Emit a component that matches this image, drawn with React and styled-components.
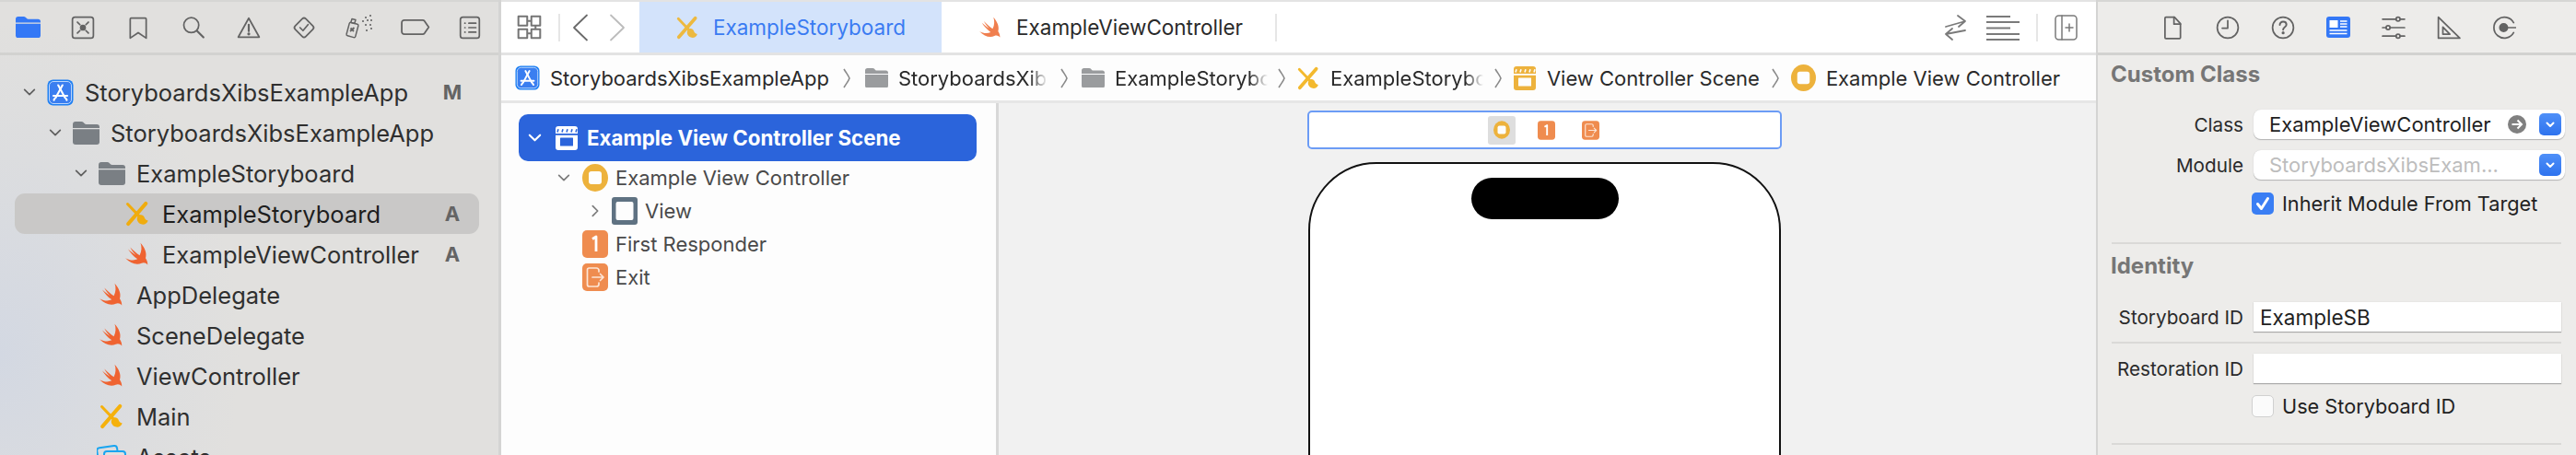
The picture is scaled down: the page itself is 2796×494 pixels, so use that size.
import React from "react";
import styled, { createGlobalStyle } from "styled-components";

const GlobalStyle = createGlobalStyle`
  html, body {
    margin: 0;
    padding: 0;
    background: #fff;
    font-family: Inter, "Noto Sans", "Liberation Sans", sans-serif;
  }
`;

const Window = styled.div`
  width: 2796px;
  height: 494px;
  overflow: hidden;
  display: flex;
  color: #2c2c2c;
`;

/* ---------- left navigator ---------- */
const Sidebar = styled.div`
  width: 541px;
  flex: none;
  height: 100%;
  border-right: 3px solid #d4d4d3;
  background: radial-gradient(ellipse 260px 360px at 0% 78%, #d3d8e2 0%, #dcdddf 60%, #e1e0de 100%);
  background-color: #e1e0de;
`;

const IconBar = styled.div`
  height: 55px;
  border-top: 2px solid #d6d6d4;
  border-bottom: 3px solid #d2d2d0;
  display: flex;
  align-items: center;
  padding-left: ${(p) => p.$left || 0}px;
`;

const BarSlot = styled.div`
  width: 60px;
  height: 40px;
  flex: none;
  display: flex;
  align-items: center;
  justify-content: center;
`;

const Tree = styled.div`
  padding-top: 18px;
`;

const TreeRow = styled.div`
  height: 44px;
  margin: 0 21px 0 16px;
  padding-left: ${(p) => 2 + p.$level * 28}px;
  display: flex;
  align-items: center;
  border-radius: 11px;
  background: ${(p) => (p.$selected ? "#c9c8c7" : "transparent")};
  color: ${(p) => (p.$selected ? "#1e1e1e" : "#2f2f2f")};
  font-size: 25.5px;
  white-space: nowrap;
`;

const ChevronSlot = styled.div`
  width: 28px;
  flex: none;
  display: flex;
  align-items: center;
  justify-content: center;
`;

const TreeIcon = styled.div`
  width: 38px;
  margin-right: 8px;
  flex: none;
  display: flex;
  align-items: center;
  justify-content: center;
`;

const Badge = styled.div`
  margin-left: auto;
  width: 40px;
  margin-right: 9px;
  text-align: center;
  font-weight: 700;
  font-size: 22px;
  color: #646464;
`;

/* ---------- editor ---------- */
const Editor = styled.div`
  flex: 1;
  min-width: 0;
  height: 100%;
  display: flex;
  flex-direction: column;
  background: #fff;
`;

const TabBar = styled.div`
  height: 55px;
  flex: none;
  border-top: 2px solid #e3e3e3;
  border-bottom: 3px solid #e3e3e3;
  display: flex;
  align-items: stretch;
  background: #fff;
`;

const TabTools = styled.div`
  width: 150px;
  flex: none;
  display: flex;
  align-items: center;
  padding-left: 17px;
  box-sizing: border-box;
  gap: 18px;
`;

const ToolRule = styled.div`
  width: 2px;
  height: 30px;
  flex: none;
  background: #e6e6e6;
`;

const NavArrow = styled.div`
  flex: none;
  display: flex;
  margin: ${(p) => p.$margin};
`;

const Tab = styled.div`
  width: ${(p) => p.$w}px;
  flex: none;
  box-sizing: border-box;
  padding-left: ${(p) => p.$pad || 0}px;
  display: flex;
  align-items: center;
  justify-content: center;
  gap: 15px;
  font-size: 22.5px;
  background: ${(p) => (p.$active ? "#d3e3fb" : "#fff")};
  color: ${(p) => (p.$active ? "#3a7bf2" : "#2a2a2a")};
`;

const TabRule = styled(ToolRule)`
  align-self: center;
`;

const TabActions = styled.div`
  margin-left: auto;
  display: flex;
  align-items: center;
  gap: 18px;
  padding-right: 20px;
`;

const Breadcrumbs = styled.div`
  height: 49px;
  flex: none;
  border-bottom: 3px solid #e6e6e6;
  background: #fdfdfd;
  display: flex;
  align-items: center;
  padding-left: 15px;
  font-size: 22px;
  color: #2a2a2a;
  white-space: nowrap;
`;

const Crumb = styled.div`
  display: flex;
  align-items: center;
  gap: 11px;
  flex: none;
`;

const CrumbText = styled.span`
  display: block;
  overflow: hidden;
  width: ${(p) => (p.$w ? `${p.$w}px` : "auto")};
  ${(p) =>
    p.$w
      ? "mask-image: linear-gradient(to right, #000 88%, transparent 100%);"
      : ""}
`;

const CrumbSep = styled.div`
  width: ${(p) => p.$w}px;
  flex: none;
  display: flex;
  justify-content: center;
`;

const EditorBody = styled.div`
  flex: 1;
  min-height: 0;
  display: flex;
`;

const Outline = styled.div`
  width: 540px;
  flex: none;
  box-sizing: border-box;
  background: #fdfdfd;
  border-right: 3px solid #d8d8d8;
  padding: 12px 0 0 19px;
`;

const SceneRow = styled.div`
  width: 497px;
  height: 51px;
  border-radius: 10px;
  background: #2b64db;
  color: #fff;
  font-weight: 700;
  font-size: 22.3px;
  display: flex;
  align-items: center;
  white-space: nowrap;
`;

const SceneChevron = styled.div`
  width: 32px;
  margin-left: 1px;
  flex: none;
  display: flex;
  justify-content: center;
`;

const SceneIcon = styled.div`
  width: 32px;
  margin: 0 6px 0 3px;
  flex: none;
  display: flex;
  justify-content: center;
`;

const OutlineRow = styled.div`
  height: 36px;
  display: flex;
  align-items: center;
  padding-left: ${(p) => p.$left}px;
  color: #4a4a4a;
  font-size: 22px;
  white-space: nowrap;
`;

const OutlineGlyph = styled.div`
  width: 28px;
  flex: none;
  margin-right: 8px;
  display: flex;
  justify-content: center;
`;

const OutlineChevron = styled.div`
  width: 24px;
  flex: none;
  margin-right: ${(p) => p.$gap}px;
  display: flex;
  justify-content: center;
`;

const Canvas = styled.div`
  flex: 1;
  background: #f1f1f1;
  padding: 8px 0 0 335px;
  overflow: hidden;
`;

const SceneDock = styled.div`
  width: 515px;
  height: 42px;
  box-sizing: border-box;
  border: 2px solid #6c9cf5;
  border-radius: 5px;
  background: #fff;
  display: flex;
  align-items: center;
  padding-left: 194px;
`;

const DockSlot = styled.div`
  width: 30px;
  height: 31px;
  flex: none;
  border-radius: 3px;
  margin-right: 18px;
  background: ${(p) => (p.$active ? "#dedede" : "transparent")};
  display: flex;
  align-items: center;
  justify-content: center;
`;

const Phone = styled.div`
  width: 513px;
  height: 600px;
  margin: 14px 0 0 1px;
  box-sizing: border-box;
  border: 2px solid #111;
  border-radius: 74px;
  background: #fff;
  padding: 15px 0 0 175px;
`;

const Island = styled.div`
  width: 160px;
  height: 45px;
  border-radius: 23px;
  background: #000;
`;

/* ---------- right inspector ---------- */
const Inspector = styled.div`
  width: 521px;
  flex: none;
  height: 100%;
  box-sizing: border-box;
  background: #edecea;
  border-left: 2px solid #d4d4d3;
`;

const Section = styled.div`
  padding: ${(p) => p.$top}px 16px 0 14px;
`;

const SectionTitle = styled.div`
  height: 30px;
  line-height: 30px;
  font-weight: 700;
  font-size: 24px;
  color: #767676;
`;

const FormRow = styled.div`
  display: flex;
  align-items: center;
  gap: 11px;
  margin-top: ${(p) => p.$gap || 0}px;
`;

const FieldLabel = styled.div`
  width: 144px;
  flex: none;
  text-align: right;
  font-size: 20.7px;
  color: #2a2a2a;
  white-space: nowrap;
`;

const PopupField = styled.div`
  width: 338px;
  height: 32px;
  margin-right: -4px;
  flex: none;
  box-sizing: border-box;
  border-radius: 8px;
  background: #fff;
  box-shadow: 0 1px 1px #b3b3b3, 0 0 1px #c8c8c8;
  display: flex;
  align-items: center;
  padding: 0 4px 0 17px;
  font-size: 22px;
  color: ${(p) => (p.$muted ? "#bdbdbd" : "#1f1f1f")};
  white-space: nowrap;
`;

const FieldEnd = styled.div`
  margin-left: auto;
  display: flex;
  align-items: center;
  gap: 14px;
`;

const Stepper = styled.div`
  width: 24px;
  height: 24px;
  border-radius: 5px;
  background: linear-gradient(#4e8ff8, #2f73ee);
  display: flex;
  align-items: center;
  justify-content: center;
`;

const CheckRow = styled.div`
  display: flex;
  align-items: center;
  gap: 9px;
  margin: ${(p) => p.$gap}px 0 0 153px;
  font-size: 21.7px;
  color: #222;
  white-space: nowrap;
`;

const CheckBox = styled.div`
  width: 24px;
  height: 24px;
  flex: none;
  box-sizing: border-box;
  border-radius: 5px;
  background: ${(p) => (p.$checked ? "#3a7ef4" : "#fbfbfb")};
  border: ${(p) => (p.$checked ? "none" : "1px solid #d0d0d0")};
  display: flex;
  align-items: center;
  justify-content: center;
`;

const TextField = styled.div`
  width: 334px;
  height: 32px;
  flex: none;
  box-sizing: border-box;
  background: #fff;
  box-shadow: 0 1px 1px #a9a9a9, 0 0 1px #cfcfcf;
  padding-left: 7px;
  display: flex;
  align-items: center;
  font-size: 22.5px;
  color: #222;
`;

const Rule = styled.div`
  height: 2px;
  margin: ${(p) => p.$top}px 0 0 1px;
  background: #dad9d7;
`;

/* ---------- drawings ---------- */
const Svg = ({ s = 26, h, vb = "0 0 24 24", children, stroke = "#636363", sw = 1.6 }) => (
  <svg
    width={s}
    height={h || s}
    viewBox={vb}
    fill="none"
    stroke={stroke}
    strokeWidth={sw}
    strokeLinecap="round"
    strokeLinejoin="round"
  >
    {children}
  </svg>
);

const Chevron = ({ dir = "down", color = "#5f5f5f", s = 16, sw = 2.6 }) => (
  <Svg s={s} stroke={color} sw={sw}>
    {dir === "down" ? <path d="M4 8l8 8 8-8" /> : <path d="M8 4l8 8-8 8" />}
  </Svg>
);

const Swift = ({ s = 28, color = "#ef6331" }) => (
  <svg width={s} height={s} viewBox="0 0 24 24">
    <path
      fill={color}
      d="M15 1.500C19 6 21.200 11 19.700 15.600 21 17.500 21.700 19.600 21.600 21.800 20.200 20 18 19.300 16 20.300 11.500 22.400 5.500 20.600 1 15.600 5 17.800 9 18.200 12.200 16.600 8.500 13.800 5.500 10.400 3.400 7.200 6 9.600 8.800 11.600 10.700 12.800 8.600 10.600 6.700 8 5.400 5.500 8.300 8.500 11.200 11 14.200 13.100 16.200 9.200 16.300 5.200 15 1.500Z"
    />
  </svg>
);

const StoryboardIcon = ({ s = 28, color = "#f0ac0e" }) => (
  <svg width={s} height={s} viewBox="0 0 24 24" fill="none" stroke={color} strokeLinecap="round">
    <path d="M20 2.500L3.500 21.500" strokeWidth="3.400" />
    <path d="M3 3L13.500 14" strokeWidth="2.600" />
    <path d="M12.500 14.500c1.800-2.400 5.200-1.800 6 .8.500 1.700 1.600 2.800 3.500 3.100-.8 2.900-3.800 4.400-6.500 3.300-3.100-1.200-4.800-4.800-3-7.200z" fill={color} stroke="none" />
  </svg>
);

const Folder = ({ w = 29, color = "#7a7f84" }) => (
  <svg width={w} height={(w * 25) / 29} viewBox="0 0 29 25">
    <path
      fill={color}
      d="M0 3a3 3 0 0 1 3-3h6.500c1.600 0 2.400 1.200 3.400 2.200.5.500 1 .8 1.800.8H26a3 3 0 0 1 3 3v1H0z"
    />
    <path fill={color} d="M0 8.200h29V22a3 3 0 0 1-3 3H3a3 3 0 0 1-3-3z" />
  </svg>
);

const AppIcon = ({ s = 29 }) => (
  <svg width={s} height={s} viewBox="0 0 29 29">
    <rect x="0.500" y="0.500" width="28" height="28" rx="6" fill="#1f80f3" />
    <rect x="2.500" y="2.500" width="24" height="24" rx="4.500" fill="#3a7ef0" stroke="#bcd6fb" strokeWidth="1" />
    <g stroke="#fff" strokeWidth="2.100" strokeLinecap="round" fill="none">
      <path d="M16.800 6.500L9.500 20" />
      <path d="M12.200 6.500L19.500 20" />
      <path d="M7 18h15" />
      <path d="M8.600 20.800L7.500 22.600" />
      <path d="M20.400 20.800L21.500 22.600" />
    </g>
  </svg>
);

const Assets = () => (
  <svg width="32" height="28" viewBox="0 0 32 28" fill="none" stroke="#19a5f0" strokeWidth="2">
    <rect x="1" y="3" width="22" height="17" rx="3" transform="rotate(-8 12 12)" />
    <rect x="8" y="8" width="23" height="18" rx="3" fill="#e1e0de" />
  </svg>
);

const SceneGlyph = ({ s = 26, color = "#fff", fillIn = "#2b64db" }) => (
  <svg width={s} height={s} viewBox="0 0 24 26">
    <rect x="0" y="0" width="24" height="26" rx="3" fill={color} />
    <path d="M3 3.200l-1 3.400M8 3.200l-1 3.400M13 3.200l-1 3.400M18 3.200l-1 3.400M23 3.200l-1 3.400" stroke={fillIn} strokeWidth="1.600" />
    <rect x="0" y="8" width="24" height="1.800" fill={fillIn} />
    <rect x="5" y="12.500" width="14" height="9" rx="0.500" fill={fillIn} />
  </svg>
);

const ControllerGlyph = ({ s = 28 }) => (
  <svg width={s} height={s + 2} viewBox="0 0 28 30">
    <ellipse cx="14" cy="15" rx="14" ry="15" fill="#edb23c" />
    <rect x="7" y="8" width="14" height="14" rx="3" fill="#fdfdfd" />
  </svg>
);

const ViewGlyph = () => (
  <svg width="28" height="30" viewBox="0 0 28 30">
    <rect x="0" y="0" width="28" height="30" rx="3" fill="#5f7282" />
    <rect x="4.500" y="5" width="19" height="20" rx="2" fill="#fdfdfd" />
  </svg>
);

const ResponderGlyph = ({ s = 28 }) => (
  <svg width={s} height={s + 2} viewBox="0 0 28 30">
    <rect width="28" height="30" rx="5" fill="#ef8c4f" />
    <path d="M11 9.500l4-2.500v16" fill="none" stroke="#fff" strokeWidth="2.800" strokeLinejoin="round" />
  </svg>
);

const ExitGlyph = ({ s = 28 }) => (
  <svg width={s} height={s + 2} viewBox="0 0 28 30">
    <rect width="28" height="30" rx="5" fill="#ef8c4f" />
    <g fill="none" stroke="#fde5d5" strokeWidth="1.700" strokeLinecap="round" strokeLinejoin="round">
      <path d="M18 9V7.500A2.500 2.500 0 0 0 15.500 5H7.500A2 2 0 0 0 5.500 7v16a2 2 0 0 0 2 2h8A2.500 2.500 0 0 0 18 22.500V21" />
      <path d="M11 15h12M19.500 11.500L23 15l-3.500 3.500" />
    </g>
  </svg>
);

const NavigatorIcons = () => (
  <>
    <BarSlot>
      <Folder w={27} color="#3478f6" />
    </BarSlot>
    <BarSlot>
      <Svg>
        <rect x="1.500" y="1.500" width="21" height="21" rx="2.500" />
        <circle cx="12" cy="12" r="2.300" fill="#636363" />
        <path d="M6.500 6.500l2.500 2.500M17.500 6.500L15 9M6.500 17.500L9 15M17.500 17.500L15 15" />
      </Svg>
    </BarSlot>
    <BarSlot>
      <Svg>
        <path d="M5 2.500h14a1 1 0 0 1 1 1v19l-8-5.500-8 5.500v-19a1 1 0 0 1 1-1z" />
      </Svg>
    </BarSlot>
    <BarSlot>
      <Svg>
        <circle cx="9.800" cy="9.500" r="7.500" />
        <path d="M15.500 15.200l6.500 6.500" strokeWidth="2" />
      </Svg>
    </BarSlot>
    <BarSlot>
      <Svg>
        <path d="M12 2.500L22.500 21.500h-21z" />
        <path d="M12 9v6.500" strokeWidth="2" />
        <circle cx="12" cy="18.300" r="0.700" fill="#636363" />
      </Svg>
    </BarSlot>
    <BarSlot>
      <Svg>
        <rect x="4.500" y="4.500" width="15" height="15" rx="2.500" transform="rotate(45 12 12)" />
        <path d="M8 12l3 3 5-6" />
      </Svg>
    </BarSlot>
    <BarSlot>
      <svg width="32" height="28" viewBox="0 0 32 28" fill="none" stroke="#636363" strokeWidth="1.500" strokeLinejoin="round">
        <rect x="3.500" y="9" width="10" height="15" rx="1.500" transform="rotate(15 8.500 16.500)" />
        <path d="M8 4.500l4 1-1.200 4-4-1z" />
        <path d="M6.500 14.500l3.500 3.500M10.500 14l-4.500 4" strokeWidth="1.800" />
        <g fill="#7d7d7d" stroke="none">
          <rect x="22" y="2" width="2" height="2" />
          <rect x="27" y="0" width="2" height="2" />
          <rect x="19" y="6" width="2" height="2" />
          <rect x="24" y="5" width="2" height="2" />
          <rect x="28" y="5" width="2" height="2" />
          <rect x="22" y="10" width="2" height="2" />
          <rect x="27" y="10" width="2" height="2" />
          <rect x="28" y="14" width="2" height="2" />
          <rect x="23" y="16" width="2" height="2" />
        </g>
      </svg>
    </BarSlot>
    <BarSlot>
      <Svg s={33}>
        <path d="M3.500 6.500h14.500a2 2 0 0 1 1.500.7l3.300 4.800-3.300 4.800a2 2 0 0 1-1.500.7H3.500a2 2 0 0 1-2-2v-7a2 2 0 0 1 2-2z" strokeWidth="1.300" />
      </Svg>
    </BarSlot>
    <BarSlot>
      <Svg>
        <rect x="2.500" y="1.500" width="19" height="21" rx="2.500" />
        <path d="M7 7.500h.2M7 12h.2M7 16.500h.2M11 7.500h7M11 12h7M11 16.500h7" />
      </Svg>
    </BarSlot>
  </>
);

const InspectorIcons = () => (
  <>
    <BarSlot>
      <Svg>
        <path d="M5.500 1.500h8.500l6 6.500v14a1 1 0 0 1-1 1H5.500a1 1 0 0 1-1-1V2.500a1 1 0 0 1 1-1z" />
        <path d="M13.500 1.500v7h6.500" />
      </Svg>
    </BarSlot>
    <BarSlot>
      <Svg>
        <circle cx="12" cy="12" r="10.500" />
        <path d="M12 5v7.500H6.500" />
      </Svg>
    </BarSlot>
    <BarSlot>
      <Svg>
        <circle cx="12" cy="12" r="10.500" />
        <path d="M8.800 9.300c0-2 1.500-3.300 3.300-3.300s3.300 1.200 3.300 3c0 2.600-3.300 2.600-3.300 5" strokeWidth="1.800" />
        <circle cx="12.100" cy="17.300" r="0.700" fill="#636363" />
      </Svg>
    </BarSlot>
    <BarSlot>
      <svg width="26" height="23" viewBox="0 0 26 23">
        <rect width="26" height="23" rx="3" fill="#3478f6" />
        <rect x="3.500" y="4" width="9" height="8" fill="#fff" />
        <path d="M15 5h7.500M15 8h7.500M15 11h7.500M3.500 15h19M3.500 18.500h19" stroke="#fff" strokeWidth="1.600" />
      </svg>
    </BarSlot>
    <BarSlot>
      <Svg>
        <path d="M1 3.500h13.500M18.500 3.500H23M1 12h3.500M8.500 12H23M1 20.500h13.500M18.500 20.500H23" />
        <circle cx="16.500" cy="3.500" r="2" />
        <circle cx="6.500" cy="12" r="2" />
        <circle cx="16.500" cy="20.500" r="2" />
      </Svg>
    </BarSlot>
    <BarSlot>
      <Svg>
        <path d="M1.500 1.500L23 22.500H1.500z" />
        <path d="M6 11.500L13 18.500H6z" />
      </Svg>
    </BarSlot>
    <BarSlot>
      <Svg>
        <path d="M21.500 7A10.500 10.500 0 1 0 21.500 17" />
        <circle cx="11.500" cy="12" r="3.800" fill="#636363" />
        <path d="M11.500 12H24" />
      </Svg>
    </BarSlot>
  </>
);

const files = [
  { level: 0, chevron: true, icon: <AppIcon />, name: "StoryboardsXibsExampleApp", badge: "M" },
  { level: 1, chevron: true, icon: <Folder />, name: "StoryboardsXibsExampleApp" },
  { level: 2, chevron: true, icon: <Folder />, name: "ExampleStoryboard" },
  { level: 3, icon: <StoryboardIcon />, name: "ExampleStoryboard", badge: "A", selected: true },
  { level: 3, icon: <Swift />, name: "ExampleViewController", badge: "A" },
  { level: 2, icon: <Swift />, name: "AppDelegate" },
  { level: 2, icon: <Swift />, name: "SceneDelegate" },
  { level: 2, icon: <Swift />, name: "ViewController" },
  { level: 2, icon: <StoryboardIcon color="#f5b10c" />, name: "Main" },
  { level: 2, icon: <Assets />, name: "Assets" },
];

const CrumbArrow = ({ w }) => (
  <CrumbSep $w={w}>
    <svg width="10" height="24" viewBox="0 0 10 24" fill="none" stroke="#8a8a8a" strokeWidth="1.600">
      <path d="M2 2c3 5 5 7 6 10-1 3-3 5-6 10" />
    </svg>
  </CrumbSep>
);

const Stepdown = () => (
  <Stepper>
    <svg width="12" height="12" viewBox="0 0 12 12" fill="none" stroke="#fff" strokeWidth="2" strokeLinecap="round" strokeLinejoin="round">
      <path d="M2.500 4.500L6 8l3.500-3.500" />
    </svg>
  </Stepper>
);

export default function App() {
  return (
    <Window>
      <GlobalStyle />
      <Sidebar>
        <IconBar>
          <NavigatorIcons />
        </IconBar>
        <Tree>
          {files.map((f, i) => (
            <TreeRow key={i} $level={f.level} $selected={f.selected}>
              <ChevronSlot>{f.chevron && <Chevron />}</ChevronSlot>
              <TreeIcon>{f.icon}</TreeIcon>
              {f.name}
              {f.badge && <Badge>{f.badge}</Badge>}
            </TreeRow>
          ))}
        </Tree>
      </Sidebar>

      <Editor>
        <TabBar>
          <TabTools>
            <Svg s={27} sw={1.800} stroke="#757575">
              <path d="M1.500 1.500h8.500v9H1.500zM14 1.500h8.500v9H14zM10 6h4M1.500 14h8.500v8.500H1.500zM14 14h8.500v8.500H14zM10 18h4M18 10.500V14" />
            </Svg>
            <ToolRule />
            <NavArrow $margin="0 0 0 -5px">
              <Svg s={18} h={30} sw={1.800} vb="0 0 18 30" stroke="#6a6a6a">
                <path d="M16 1.500L2 15l14 13.500" />
              </Svg>
            </NavArrow>
            <NavArrow $margin="0 0 0 4px">
              <Svg s={18} h={30} sw={1.800} vb="0 0 18 30" stroke="#bcbcbc">
                <path d="M2 1.500L16 15 2 28.500" />
              </Svg>
            </NavArrow>
          </TabTools>
          <Tab $w={328} $active>
            <StoryboardIcon s={26} color="#edb93f" />
            ExampleStoryboard
          </Tab>
          <Tab $w={362} $pad={5}>
            <Swift s={26} color="#f07f4f" />
            ExampleViewController
          </Tab>
          <TabRule />
          <TabActions>
            <Svg s={28} h={28} sw={1.800} vb="0 0 28 28" stroke="#7a7a7a">
              <path d="M2 13L23 7M15 1l8 6-7 6" />
              <path d="M23 17L2 21M9 15l-7 6 7 6" />
            </Svg>
            <svg width="36" height="28" viewBox="0 0 36 28" stroke="#7a7a7a" strokeWidth="2.200" fill="none">
              <path d="M0 2h26M0 8h36M0 14.500h26M0 21h36M0 27h36" />
            </svg>
            <ToolRule />
            <Svg s={25} h={28} sw={1.500} vb="0 0 25 28" stroke="#7a7a7a">
              <rect x="1" y="1" width="23" height="26" rx="3.500" />
              <path d="M8 1v26M16 10v8M12 14h8" />
            </Svg>
          </TabActions>
        </TabBar>

        <Breadcrumbs>
          <Crumb>
            <AppIcon s={27} />
            <CrumbText>StoryboardsXibsExampleApp</CrumbText>
          </Crumb>
          <CrumbArrow w={39} />
          <Crumb>
            <Folder w={25} color="#9a9c9e" />
            <CrumbText $w={162}>StoryboardsXibsExampleApp</CrumbText>
          </Crumb>
          <CrumbArrow w={37} />
          <Crumb>
            <Folder w={25} color="#9a9c9e" />
            <CrumbText $w={166}>ExampleStoryboard</CrumbText>
          </Crumb>
          <CrumbArrow w={31} />
          <Crumb>
            <StoryboardIcon s={26} color="#f3b92e" />
            <CrumbText $w={166}>ExampleStoryboard</CrumbText>
          </Crumb>
          <CrumbArrow w={32} />
          <Crumb>
            <SceneGlyph s={26} color="#edb23c" fillIn="#fdfdfd" />
            View Controller Scene
          </Crumb>
          <CrumbArrow w={34} />
          <Crumb>
            <ControllerGlyph s={27} />
            Example View Controller
          </Crumb>
        </Breadcrumbs>

        <EditorBody>
          <Outline>
            <SceneRow>
              <SceneChevron>
                <Chevron color="#fff" s={17} sw={3} />
              </SceneChevron>
              <SceneIcon>
                <SceneGlyph />
              </SceneIcon>
              Example View Controller Scene
            </SceneRow>
            <OutlineRow $left={37}>
              <OutlineChevron $gap={8}>
                <Chevron color="#7c7c7c" />
              </OutlineChevron>
              <OutlineGlyph>
                <ControllerGlyph />
              </OutlineGlyph>
              Example View Controller
            </OutlineRow>
            <OutlineRow $left={71}>
              <OutlineChevron $gap={6}>
                <Chevron dir="right" color="#7c7c7c" />
              </OutlineChevron>
              <OutlineGlyph>
                <ViewGlyph />
              </OutlineGlyph>
              View
            </OutlineRow>
            <OutlineRow $left={69}>
              <OutlineGlyph>
                <ResponderGlyph />
              </OutlineGlyph>
              First Responder
            </OutlineRow>
            <OutlineRow $left={69}>
              <OutlineGlyph>
                <ExitGlyph />
              </OutlineGlyph>
              Exit
            </OutlineRow>
          </Outline>

          <Canvas>
            <SceneDock>
              <DockSlot $active>
                <ControllerGlyph s={18} />
              </DockSlot>
              <DockSlot>
                <ResponderGlyph s={19} />
              </DockSlot>
              <DockSlot>
                <ExitGlyph s={19} />
              </DockSlot>
            </SceneDock>
            <Phone>
              <Island />
            </Phone>
          </Canvas>
        </EditorBody>
      </Editor>

      <Inspector>
        <IconBar $left={51}>
          <InspectorIcons />
        </IconBar>
        <Section $top={6}>
          <SectionTitle>Custom Class</SectionTitle>
          <FormRow $gap={23}>
            <FieldLabel>Class</FieldLabel>
            <PopupField>
              ExampleViewController
              <FieldEnd>
                <svg width="20" height="20" viewBox="0 0 20 20">
                  <circle cx="10" cy="10" r="10" fill="#808080" />
                  <path d="M4.500 10h10M10.500 5.500L15 10l-4.500 4.500" stroke="#fff" strokeWidth="2" fill="none" />
                </svg>
                <Stepdown />
              </FieldEnd>
            </PopupField>
          </FormRow>
          <FormRow $gap={12}>
            <FieldLabel>Module</FieldLabel>
            <PopupField $muted>
              StoryboardsXibsExam...
              <FieldEnd>
                <Stepdown />
              </FieldEnd>
            </PopupField>
          </FormRow>
          <CheckRow $gap={13}>
            <CheckBox $checked>
              <svg width="18" height="18" viewBox="0 0 18 18" fill="none" stroke="#fff" strokeWidth="3" strokeLinecap="round" strokeLinejoin="round">
                <path d="M3.500 9.500L7.500 14.500 14.500 3.500" />
              </svg>
            </CheckBox>
            Inherit Module From Target
          </CheckRow>
          <Rule $top={29} />
        </Section>
        <Section $top={9}>
          <SectionTitle>Identity</SectionTitle>
          <FormRow $gap={24}>
            <FieldLabel>Storyboard ID</FieldLabel>
            <TextField>ExampleSB</TextField>
          </FormRow>
          <Rule $top={11} />
          <FormRow $gap={11}>
            <FieldLabel>Restoration ID</FieldLabel>
            <TextField />
          </FormRow>
          <CheckRow $gap={12}>
            <CheckBox />
            Use Storyboard ID
          </CheckRow>
          <Rule $top={27} />
        </Section>
      </Inspector>
    </Window>
  );
}
